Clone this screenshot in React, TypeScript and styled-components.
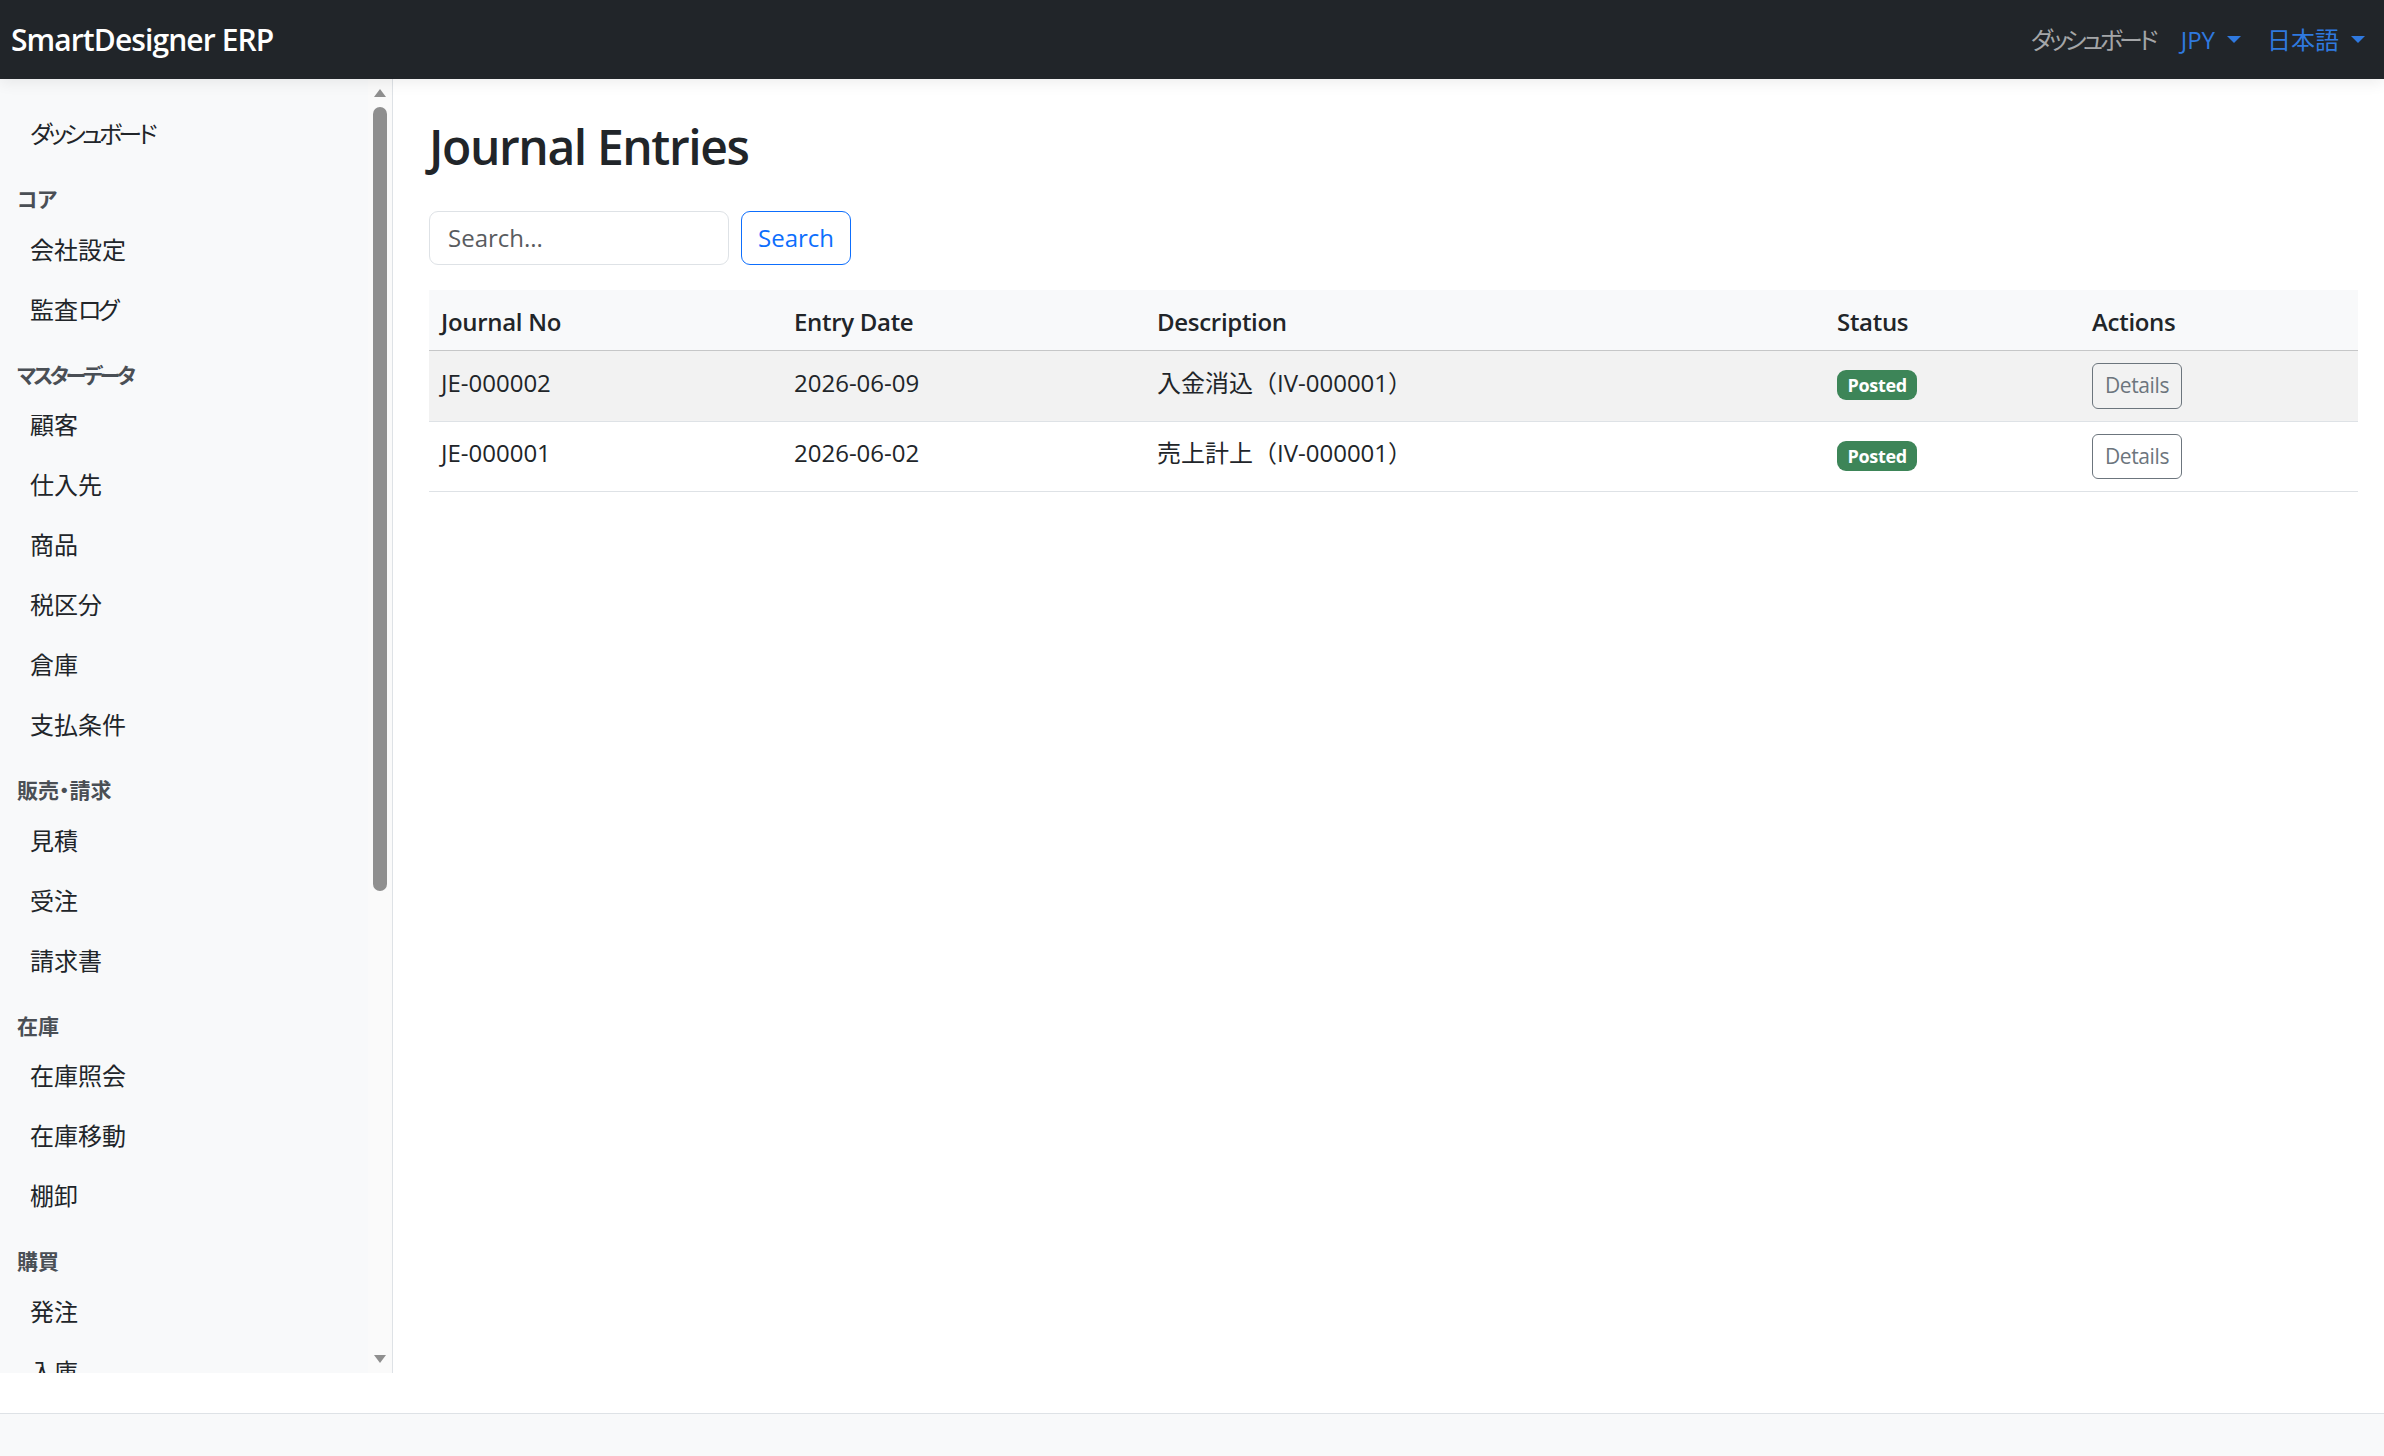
import React from "react";
import styled, { createGlobalStyle } from "styled-components";

const GlobalStyle = createGlobalStyle`
  html, body {
    margin: 0;
    padding: 0;
    background: #ffffff;
  }
  body {
    font-family: "Open Sans", "Noto Sans CJK JP", sans-serif;
    font-feature-settings: "palt";
    color: #212529;
    font-size: 24px;
    line-height: 1.5;
  }
  * { box-sizing: border-box; }
`;

const Page = styled.div`
  display: flex;
  flex-direction: column;
  width: 2384px;
  height: 1456px;
  overflow: hidden;
`;

const Navbar = styled.header`
  position: relative;
  z-index: 2;
  height: 79px;
  flex: 0 0 79px;
  background: #212529;
  display: flex;
  align-items: center;
  justify-content: space-between;
  padding: 0 6px 0 11px;
  box-shadow: 0 4px 14px rgba(0, 0, 0, 0.07);
`;

const Brand = styled.span`
  color: #ffffff;
  font-size: 30px;
  font-weight: 600;
  letter-spacing: -0.9px;
`;

const NavRight = styled.nav`
  display: flex;
  align-items: center;
`;

const NavLink = styled.span<{ $accent?: boolean; $caret?: boolean }>`
  display: inline-flex;
  align-items: center;
  padding: 0 13px;
  font-size: 24px;
  color: ${(p) => (p.$accent ? "#2f79df" : "rgba(255,255,255,0.6)")};
  &::after {
    content: ${(p) => (p.$caret ? "''" : "none")};
    display: inline-block;
    margin-left: 12px;
    border-top: 7px solid currentColor;
    border-left: 7px solid transparent;
    border-right: 7px solid transparent;
  }
`;

const Kana = styled.span`
  letter-spacing: -0.15em;
`;

const Body = styled.div`
  display: flex;
  flex: 0 0 1294px;
  height: 1294px;
`;

const Sidebar = styled.aside`
  display: flex;
  width: 393px;
  flex: 0 0 393px;
  height: 100%;
  background: #f8f9fa;
  border-right: 1px solid #dee2e6;
`;

const SideNav = styled.div`
  flex: 1;
  overflow: hidden;
  padding-top: 25px;
`;

const SectionTitle = styled.div`
  padding-left: 17px;
  margin: 20px 0 4px;
  font-size: 21px;
  line-height: 31.5px;
  font-weight: 600;
  color: #4a4f55;
`;

const SideLink = styled.a`
  display: block;
  padding: 12px 12px 12px 30px;
  line-height: 36px;
  font-size: 24px;
  color: #212529;
  text-decoration: none;
  white-space: nowrap;
`;

const ScrollTrack = styled.div`
  width: 24px;
  flex: 0 0 24px;
  background: #fafafa;
  display: flex;
  flex-direction: column;
  align-items: center;
  padding: 10px 0;
`;

const ScrollThumb = styled.div`
  width: 14px;
  height: 784px;
  margin-top: 10px;
  border-radius: 7px;
  background: #8f8f8f;
`;

const ScrollSpacer = styled.div`
  flex: 1;
`;

const Main = styled.main`
  flex: 1;
  padding: 39px 26px 0 36px;
  min-width: 0;
`;

const Title = styled.h2`
  margin: 0;
  font-size: 48px;
  line-height: 57.6px;
  font-weight: 600;
  letter-spacing: -1.4px;
  color: #212529;
`;

const SearchForm = styled.form`
  display: flex;
  gap: 12px;
  margin: 35px 0 25px;
`;

const SearchInput = styled.input`
  width: 300px;
  height: 54px;
  padding: 0 18px;
  font: inherit;
  font-size: 24px;
  color: #212529;
  border: 1px solid #dee2e6;
  border-radius: 9px;
  background: #fff;
  outline: none;
  &::placeholder {
    color: #595c5f;
  }
`;

const OutlineButton = styled.button`
  height: 54px;
  padding: 0 16px;
  font: inherit;
  font-size: 24px;
  color: #0d6efd;
  background: transparent;
  border: 1px solid #0d6efd;
  border-radius: 9px;
`;

const Table = styled.table`
  width: 1929px;
  border-collapse: collapse;
  table-layout: fixed;
`;

const HeadCell = styled.th<{ $w: number }>`
  width: ${(p) => p.$w}px;
  text-align: left;
  padding: 14px 12px 10px;
  height: 61px;
  font-size: 24px;
  font-weight: 600;
  background: #f8f9fa;
  border-bottom: 1px solid #c6c7c8;
  letter-spacing: -0.3px;
`;

const Row = styled.tr<{ $striped?: boolean }>`
  background: ${(p) => (p.$striped ? "#f2f2f2" : "#ffffff")};
  border-bottom: 1px solid #dee2e6;
`;

const Cell = styled.td<{ $control?: boolean }>`
  padding: ${(p) => (p.$control ? "12px" : "9px 12px 15px")};
  height: 70px;
  vertical-align: middle;
  font-size: 24px;
  white-space: nowrap;
  font-feature-settings: normal;
`;

const Badge = styled.span`
  display: inline-block;
  vertical-align: middle;
  padding: 6px 10.5px;
  font-size: 18px;
  font-weight: 700;
  line-height: 1;
  letter-spacing: -0.3px;
  color: #ffffff;
  background: #3d8558;
  border-radius: 9px;
`;

const SmallButton = styled.button`
  display: block;
  padding: 6px 12px;
  font: inherit;
  font-size: 21px;
  line-height: 31.5px;
  letter-spacing: -0.4px;
  color: #6c757d;
  background: transparent;
  border: 1px solid #6c757d;
  border-radius: 6px;
`;

const Footer = styled.footer`
  margin-top: 40px;
  flex: 0 0 43px;
  height: 43px;
  background: #f8f9fa;
  border-top: 1px solid #dee2e6;
`;

const Arrow = ({ up }: { up?: boolean }) => (
  <svg width="12" height="8" viewBox="0 0 12 8">
    <polygon
      points={up ? "6,0 12,8 0,8" : "0,0 12,0 6,8"}
      fill="#8f8f8f"
    />
  </svg>
);

type NavGroup = {
  title?: React.ReactNode;
  items: { key: string; label: React.ReactNode }[];
};

const k = (s: string) => <Kana>{s}</Kana>;
const plain = (list: string[]) => list.map((s) => ({ key: s, label: s }));

const groups: NavGroup[] = [
  { items: [{ key: "dash", label: k("ダッシュボード") }] },
  {
    title: "コア",
    items: [
      { key: "company", label: "会社設定" },
      { key: "audit", label: <>監査{k("ログ")}</> },
    ],
  },
  {
    title: k("マスターデータ"),
    items: plain(["顧客", "仕入先", "商品", "税区分", "倉庫", "支払条件"]),
  },
  { title: "販売・請求", items: plain(["見積", "受注", "請求書"]) },
  { title: "在庫", items: plain(["在庫照会", "在庫移動", "棚卸"]) },
  { title: "購買", items: plain(["発注", "入庫"]) },
];

const entries = [
  {
    no: "JE-000002",
    date: "2026-06-09",
    desc: "入金消込（IV-000001）",
    status: "Posted",
  },
  {
    no: "JE-000001",
    date: "2026-06-02",
    desc: "売上計上（IV-000001）",
    status: "Posted",
  },
];

const columns = [
  { label: "Journal No", w: 353 },
  { label: "Entry Date", w: 363 },
  { label: "Description", w: 680 },
  { label: "Status", w: 255 },
  { label: "Actions", w: 278 },
];

export default function App() {
  return (
    <>
      <GlobalStyle />
      <Page>
        <Navbar>
          <Brand>SmartDesigner ERP</Brand>
          <NavRight>
            <NavLink>{k("ダッシュボード")}</NavLink>
            <NavLink $accent $caret>
              JPY
            </NavLink>
            <NavLink $accent $caret>
              日本語
            </NavLink>
          </NavRight>
        </Navbar>
        <Body>
          <Sidebar>
            <SideNav>
              {groups.map((g, i) => (
                <React.Fragment key={i}>
                  {g.title && <SectionTitle>{g.title}</SectionTitle>}
                  {g.items.map((it) => (
                    <SideLink key={it.key}>{it.label}</SideLink>
                  ))}
                </React.Fragment>
              ))}
            </SideNav>
            <ScrollTrack>
              <Arrow up />
              <ScrollThumb />
              <ScrollSpacer />
              <Arrow />
            </ScrollTrack>
          </Sidebar>
          <Main>
            <Title>Journal Entries</Title>
            <SearchForm onSubmit={(e) => e.preventDefault()}>
              <SearchInput placeholder="Search..." />
              <OutlineButton type="submit">Search</OutlineButton>
            </SearchForm>
            <Table>
              <thead>
                <tr>
                  {columns.map((c) => (
                    <HeadCell key={c.label} $w={c.w}>
                      {c.label}
                    </HeadCell>
                  ))}
                </tr>
              </thead>
              <tbody>
                {entries.map((e, i) => (
                  <Row key={e.no} $striped={i % 2 === 0}>
                    <Cell>{e.no}</Cell>
                    <Cell>{e.date}</Cell>
                    <Cell>{e.desc}</Cell>
                    <Cell>
                      <Badge>{e.status}</Badge>
                    </Cell>
                    <Cell $control>
                      <SmallButton>Details</SmallButton>
                    </Cell>
                  </Row>
                ))}
              </tbody>
            </Table>
          </Main>
        </Body>
        <Footer />
      </Page>
    </>
  );
}
